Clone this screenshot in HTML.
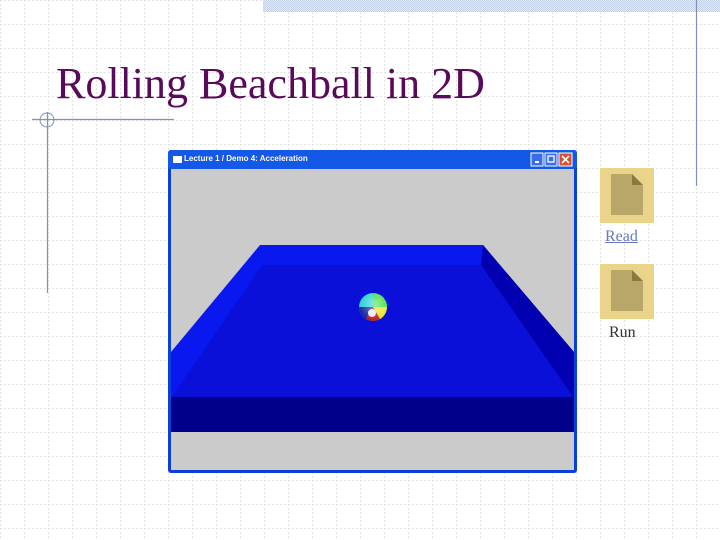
<!DOCTYPE html>
<html><head><style>
html,body{margin:0;padding:0}
body{width:720px;height:540px;position:relative;overflow:hidden;background:#fff}
.abs{position:absolute}
</style></head><body>
<svg class="abs" style="left:0;top:0" width="720" height="540">
<defs>
<pattern id="g" width="24" height="24" patternUnits="userSpaceOnUse">
<line x1="0" y1="0.5" x2="24" y2="0.5" stroke="#e2e2e2" stroke-width="1" stroke-dasharray="2,2"/>
<line x1="0.5" y1="0" x2="0.5" y2="24" stroke="#e2e2e2" stroke-width="1" stroke-dasharray="2,2"/>
</pattern>
<pattern id="d" width="2" height="2" patternUnits="userSpaceOnUse">
<rect width="2" height="2" fill="#e4eaf4"/><rect width="1" height="1" fill="#c4d0e6"/><rect x="1" y="1" width="1" height="1" fill="#c4d0e6"/>
</pattern>
<radialGradient id="bg" cx="0.6" cy="0.4" r="0.6"><stop offset="0" stop-color="#fff" stop-opacity=".5"/><stop offset="1" stop-color="#fff" stop-opacity="0"/></radialGradient>
</defs>
<rect width="720" height="540" fill="url(#g)"/>
<rect x="263" y="0" width="457" height="12" fill="url(#d)"/>
<line x1="696.5" y1="0" x2="696.5" y2="186" stroke="#8090b8" stroke-width="1.2"/>
<line x1="32" y1="119.5" x2="174" y2="119.5" stroke="#8090b8" stroke-width="1.2"/>
<line x1="47.5" y1="112" x2="47.5" y2="293" stroke="#8090b8" stroke-width="1.2"/>
<circle cx="47" cy="120" r="7" fill="none" stroke="#8090b8" stroke-width="1"/>
<rect x="168" y="150" width="409" height="323" fill="#0a3fd8" rx="3"/>
<rect x="168" y="150" width="409" height="19" fill="#1458e8" rx="3"/>
<rect x="171" y="169" width="403" height="301" fill="#cbcbcb"/>
<rect x="173" y="156" width="9" height="7" fill="#fff"/>
<rect x="531" y="153" width="12" height="13" fill="#3a6ee8" stroke="#fff" stroke-width="1"/>
<rect x="535" y="161" width="4" height="2" fill="#fff"/>
<rect x="545" y="153" width="12" height="13" fill="#3a6ee8" stroke="#fff" stroke-width="1"/>
<rect x="548" y="156" width="6" height="6" fill="none" stroke="#fff" stroke-width="1.3"/>
<rect x="559" y="153" width="13" height="13" fill="#d8502c" stroke="#fff" stroke-width="1"/>
<path d="M562 156L569 163M569 156L562 163" stroke="#fff" stroke-width="1.6"/>
<polygon points="260,245 483,245 574,352 574,398 171,398 171,352" fill="#0a18f0"/>
<polygon points="483,245 574,352 574,398 481,265" fill="#0000b0"/>
<polygon points="262,265 481,265 574,398 171,398" fill="#0a10d8"/>
<rect x="171" y="397" width="403" height="35" fill="#00008a"/>
<g>
<circle cx="373" cy="307" r="14" fill="#22d0d0"/>
<path d="M373 293A14 14 0 0 1 387 307L373 307Z" fill="#30e030"/>
<path d="M387 307A14 14 0 0 1 380 319L373 307Z" fill="#f0e020"/>
<path d="M380 319A14 14 0 0 1 366 319L373 307Z" fill="#c01818"/>
<path d="M366 319A14 14 0 0 1 359 307L373 307Z" fill="#1828a0"/>
<circle cx="372" cy="313" r="4" fill="#e8e8f0"/>
<circle cx="373" cy="307" r="14" fill="url(#bg)"/>
</g>
<rect x="600" y="168" width="54" height="55" fill="#e9d48a"/>
<path d="M611 174H632L643 185V215H611Z" fill="#b8a768"/>
<path d="M632 174L643 185H632Z" fill="#8a7a40"/>
<rect x="600" y="264" width="54" height="55" fill="#e9d48a"/>
<path d="M611 270H632L643 281V311H611Z" fill="#b8a768"/>
<path d="M632 270L643 281H632Z" fill="#8a7a40"/>
</svg>
<div class="abs" style="left:56px;top:58px;font:44px 'Liberation Serif',serif;color:#5a0a5a;white-space:nowrap">Rolling Beachball in 2D</div>
<div class="abs" style="left:170px;top:154px;width:200px;font:bold 8px 'Liberation Sans',sans-serif;color:#fff;padding-left:14px;white-space:nowrap">Lecture 1 / Demo 4: Acceleration</div>
<div class="abs" style="left:605px;top:228px;font:16px 'Liberation Serif',serif;color:#6878c8;text-decoration:underline">Read</div>
<div class="abs" style="left:609px;top:324px;font:16px 'Liberation Serif',serif;color:#333">Run</div>
</body></html>
